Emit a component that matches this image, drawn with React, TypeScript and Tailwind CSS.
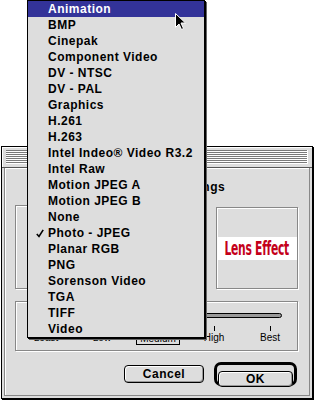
import React from 'react';

const items = [
  'Animation',
  'BMP',
  'Cinepak',
  'Component Video',
  'DV - NTSC',
  'DV - PAL',
  'Graphics',
  'H.261',
  'H.263',
  'Intel Indeo® Video R3.2',
  'Intel Raw',
  'Motion JPEG A',
  'Motion JPEG B',
  'None',
  'Photo - JPEG',
  'Planar RGB',
  'PNG',
  'Sorenson Video',
  'TGA',
  'TIFF',
  'Video',
];

const labels = ['Least', 'Low', 'Medium', 'High', 'Best'];

function Cursor() {
  return (
    <svg className="absolute left-[174px] top-[12px]" width="13" height="20" viewBox="0 0 13 20">
      <path
        d="M1.5 1.5 L1.5 15.5 L5 12 L7.5 17.5 L9.5 16.5 L7 11 L11.5 11 Z"
        fill="#000"
        stroke="#fff"
        strokeWidth="1"
      />
    </svg>
  );
}

function Check() {
  return (
    <svg className="absolute left-[8px] top-[4px]" width="8" height="9" viewBox="0 0 8 9">
      <path d="M0.8 5 L3 7.5 L7.2 0.8" fill="none" stroke="#000" strokeWidth="1.6" />
    </svg>
  );
}

export default function App() {
  return (
    <div className="relative w-[315px] h-[402px] bg-white overflow-hidden font-['Liberation_Sans',Arial,sans-serif]">
      {/* Dialog window */}
      <div className="absolute left-[1px] top-[146px] w-[312px] h-[253px] flex flex-col border border-black bg-[#dddddd] shadow-[1px_1px_0_#000]">
        {/* Title bar */}
        <div className="h-[21px] px-[4px] py-[3px] border-b border-[#555] shadow-[inset_1px_1px_0_#fff]">
          <div className="h-full bg-[repeating-linear-gradient(to_bottom,#7a7a7a_0px,#7a7a7a_1px,#ffffff_1px,#ffffff_2px)] border-r border-b border-white" />
        </div>

        {/* Content */}
        <div className="flex-1 mx-[2px] mb-[2px] border border-t-0 border-[#888] shadow-[inset_1px_1px_0_#fff] pl-[10px] pr-[11px] flex flex-col">
          <div className="mt-[11px] h-[16px] leading-[16px] text-center text-[12px] font-bold tracking-[0.5px] text-black">
            Compression Settings
          </div>

          <div className="mt-[10px] flex gap-[10px]">
            <div className="flex-1 h-[84px] border border-[#888] shadow-[inset_1px_1px_0_#fff,1px_1px_0_#fff]" />
            <div className="mt-[2px] w-[82px] h-[82px] border border-[#888] shadow-[inset_1px_1px_0_#fff,1px_1px_0_#fff] flex items-center">
              <div className="w-full h-[23px] bg-white flex items-center justify-center overflow-hidden">
                <span className="inline-block scale-x-[0.6] text-[20px] leading-none font-bold text-[#c4001a] whitespace-nowrap tracking-[-0.5px] font-['DejaVu_Sans_Condensed','DejaVu_Sans',sans-serif]">
                  Lens Effect
                </span>
              </div>
            </div>
          </div>

          {/* Quality slider */}
          <div className="mt-[12px] h-[50px] border border-[#888] shadow-[inset_1px_1px_0_#fff,1px_1px_0_#fff] pt-[11px]">
            <div className="ml-[20px] w-[246px] h-[5px] rounded-full border border-black bg-[#999]" />
            <div className="mt-[8px] ml-[2px] grid grid-cols-[repeat(5,56px)]">
              {labels.map((l) => (
                <div key={l} className="flex justify-center">
                  <div className="w-px h-[5px] bg-black" />
                </div>
              ))}
            </div>
            <div className="mt-[1px] ml-[2px] grid grid-cols-[repeat(5,56px)] text-[10px] leading-[11px] text-black">
              {labels.map((l) => (
                <div key={l} className="flex justify-center">
                  <span className={l === 'Medium' ? 'border border-black px-[3px]' : ''}>{l}</span>
                </div>
              ))}
            </div>
          </div>

          {/* Buttons */}
          <div className="mt-[11px] flex items-center justify-end gap-[10px] pr-[1px]">
            <button className="w-[80px] h-[18px] rounded-[4px] border border-black bg-[#dddddd] shadow-[inset_1px_1px_0_#fff,inset_-1px_-1px_0_#999] text-[12px] leading-none font-bold tracking-[0.5px] text-black">
              Cancel
            </button>
            <div className="w-[83px] h-[24px] rounded-[7px] border-[3px] border-black p-[1px] bg-[#dddddd]">
              <button className="w-full h-full rounded-[4px] border border-black bg-[#dddddd] shadow-[inset_1px_1px_0_#fff,inset_-1px_-1px_0_#999] text-[12px] leading-none font-bold tracking-[0.5px] text-black">
                OK
              </button>
            </div>
          </div>
        </div>
      </div>

      {/* Popup menu */}
      <div className="absolute left-[27px] top-0 w-[178px] border border-black bg-[#dddddd] shadow-[1px_1px_0_#000,2px_2px_0_#666]">
        {items.map((item, i) => (
          <div
            key={item}
            className={
              'relative h-[16px] leading-[16px] pl-[20px] text-[12px] font-bold tracking-[0.5px] whitespace-nowrap ' +
              (i === 0 ? 'bg-[#333399] text-white' : 'text-black')
            }
          >
            {item === 'Photo - JPEG' && <Check />}
            {item}
          </div>
        ))}
      </div>

      <Cursor />
    </div>
  );
}
